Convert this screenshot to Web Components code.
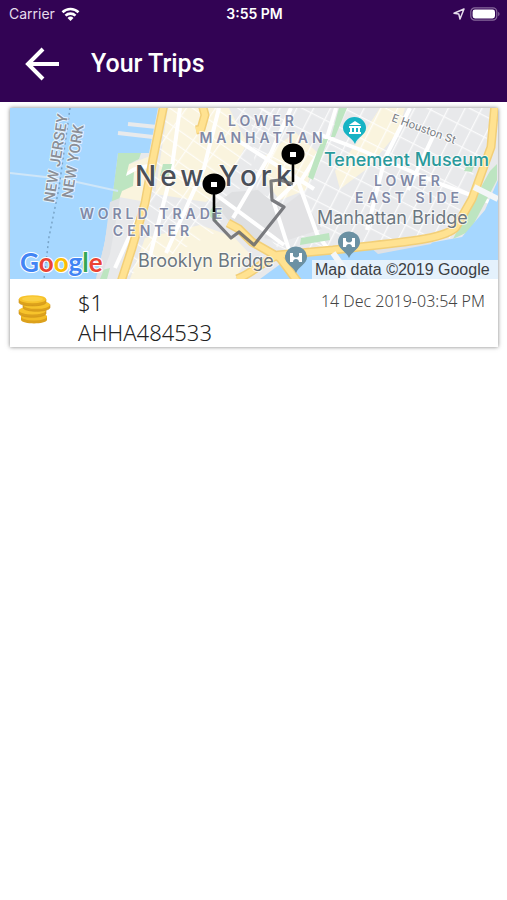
<!DOCTYPE html>
<html lang="en">
<head>
<meta charset="utf-8">
<meta name="viewport" content="width=device-width, initial-scale=1">
<title>Your Trips</title>
<style>
    body {
        margin: 0;
        background: #fff;
        font-family: "Noto Sans", "Open Sans", sans-serif;
    }
</style>
</head>
<body>
<trips-page>
    <status-bar slot="top" carrier="Carrier" time="3:55 PM"></status-bar>
    <app-header slot="top">Your Trips</app-header>
    <trip-card>
        <trip-map slot="map"></trip-map>
        <span slot="fare">$1</span>
        <span slot="reference">AHHA484533</span>
        <time slot="date" datetime="2019-12-14T15:54">14 Dec 2019-03:54 PM</time>
    </trip-card>
</trips-page>

<script>
// Page shell: a coloured top area and a list of cards
class TripsPage extends HTMLElement {
    constructor() {
        super();
        this.attachShadow({ mode: 'open' }).innerHTML = `
            <style>
                :host { display: block; }
                header { background: #320354; color: #fff; }
                main {
                    display: flex;
                    flex-direction: column;
                    gap: 12px;
                    padding: 6px 9px 12px 10px;
                }
            </style>
            <header><slot name="top"></slot></header>
            <main><slot></slot></main>
        `;
    }
}

class StatusBar extends HTMLElement {
    connectedCallback() {
        const root = this.shadowRoot || this.attachShadow({ mode: 'open' });
        root.innerHTML = `
            <style>
                :host {
                    display: grid;
                    grid-template-columns: 1fr auto 1fr;
                    align-items: center;
                    height: 28px;
                    padding: 0 7px 0 9px;
                    font: 14px/28px Inter, sans-serif;
                }
                .side { display: flex; align-items: center; gap: 6px; }
                .end { justify-content: flex-end; gap: 5px; }
                .carrier { color: #e6dcec; }
                .time { font-weight: 600; }
                svg { display: block; }
            </style>
            <div class="side">
                <span class="carrier">${this.getAttribute('carrier')}</span>
                <svg width="19" height="14" viewBox="0 0 18 14" fill="none" stroke="#fff" stroke-width="2.6" aria-hidden="true">
                    <path d="M1 5.2a11.6 11.6 0 0 1 16 0M4 8.6a7.2 7.2 0 0 1 10 0"/>
                    <path d="M9 14l-3-3.1a4.4 4.4 0 0 1 6 0z" fill="#fff" stroke="none"/>
                </svg>
            </div>
            <span class="time">${this.getAttribute('time')}</span>
            <div class="side end">
                <svg width="12" height="12" viewBox="0 0 12 12" fill="none" stroke="#e6dcec" stroke-width="1.5" stroke-linejoin="round" aria-hidden="true">
                    <path d="M11 1L1 5.2l4.8.9L7 11z"/>
                </svg>
                <svg width="30" height="14" viewBox="0 0 30 14" aria-hidden="true">
                    <rect x=".8" y=".8" width="26" height="12.4" rx="4" fill="none" stroke="#87699b" stroke-width="1.2"/>
                    <rect x="2.6" y="2.6" width="22.4" height="8.8" rx="2.4" fill="#fff"/>
                    <path d="M28.2 4.8c1.8.8 1.8 3.6 0 4.4z" fill="#87699b"/>
                </svg>
            </div>
        `;
    }
}

class AppHeader extends HTMLElement {
    constructor() {
        super();
        this.attachShadow({ mode: 'open' }).innerHTML = `
            <style>
                :host {
                    display: flex;
                    align-items: center;
                    gap: 24px;
                    height: 74px;
                    padding: 0 18px;
                }
                button {
                    display: flex;
                    padding: 7px;
                    margin-bottom: 2px;
                    border: 0;
                    background: none;
                    color: inherit;
                    cursor: pointer;
                }
                h1 {
                    margin: 0 0 2px;
                    font: 500 25px/32px Roboto, sans-serif;
                }
            </style>
            <button type="button" aria-label="Back">
                <svg width="35" height="34" viewBox="0 0 35 34" fill="none" stroke="#fff" stroke-width="4" aria-hidden="true">
                    <path d="M34 17H4M18 2L3 17l15 15"/>
                </svg>
            </button>
            <h1><slot></slot></h1>
        `;
    }
}

class TripCard extends HTMLElement {
    constructor() {
        super();
        this.attachShadow({ mode: 'open' }).innerHTML = `
            <style>
                :host {
                    display: block;
                    background: #fff;
                    box-shadow: 0 0 4px rgba(0, 0, 0, .5);
                }
                .details {
                    display: flex;
                    align-items: flex-start;
                    padding: 8px 13px 0 8px;
                }
                .coins { flex: none; margin: 8px 27px 0 0; }
                .text {
                    flex: 1;
                    font-size: 22px;
                    font-weight: 300;
                    line-height: 30px;
                    color: #222;
                }
                .text div { white-space: nowrap; }
                .date {
                    font-size: 16px;
                    font-weight: 300;
                    line-height: 28px;
                    color: #444;
                    white-space: nowrap;
                }
            </style>
            <slot name="map"></slot>
            <div class="details">
                <svg class="coins" width="33" height="29" viewBox="0 0 33 29" aria-hidden="true">
                    <g stroke="#c98f17">
                        <path d="M3 21v4c1 4.5 25 4.5 26 0v-4z" fill="#dca11c" stroke="none"/>
                        <ellipse cx="16" cy="21.5" rx="13" ry="4" fill="#f3bc25" stroke="none"/>
                        <path d="M1 15v3.5c1 5 26 5 27 0V15z" fill="#dca11c" stroke-width=".6"/>
                        <ellipse cx="14.5" cy="15.5" rx="13.5" ry="4" fill="#f7c32b" stroke="none"/>
                        <path d="M5 9.5v3c1 5 26 5 27 0v-3z" fill="#dca11c" stroke-width=".6"/>
                        <ellipse cx="18.5" cy="9.8" rx="13.5" ry="4" fill="#f7c32b" stroke="none"/>
                        <path d="M1 4v3.5c1 4.5 26 4.5 27 0V4z" fill="#dca11c" stroke-width=".6"/>
                        <ellipse cx="14.5" cy="4.2" rx="13.5" ry="4" fill="#f7c32b" stroke="none"/>
                    </g>
                    <ellipse cx="14.5" cy="4" rx="10.5" ry="2.5" fill="#fbd044"/>
                </svg>
                <div class="text">
                    <div><slot name="fare"></slot></div>
                    <div><slot name="reference"></slot></div>
                </div>
                <div class="date"><slot name="date"></slot></div>
            </div>
        `;
    }
}

// Static map with the trip's route drawn over it
class TripMap extends HTMLElement {
    constructor() {
        super();
        this.attachShadow({ mode: 'open' }).innerHTML = `
            <style>
                :host { display: block; }
                svg { display: block; width: 100%; height: auto; }
                text {
                    font-family: Inter, sans-serif;
                    paint-order: stroke;
                    stroke: rgba(255, 255, 255, .7);
                    stroke-width: 2px;
                    stroke-linejoin: round;
                }
                .area { font-size: 14px; font-weight: 600; letter-spacing: 4px; fill: #8189a6; text-anchor: middle; }
                .place { font-size: 18px; fill: #6c7780; }
                .museum { font-size: 18px; font-weight: 500; fill: #2a9a9c; }
                .city { font-size: 28px; font-weight: 500; letter-spacing: 4px; fill: #4a4f58; }
                .state { font: 500 15px Roboto, sans-serif; fill: #8b8f97; text-anchor: middle; }
                .street { font-size: 11px; fill: #75797f; }
                .google { font: 26px Lato, sans-serif; font-weight: 700; stroke: #fff; }
                .credit { font: 16px "Liberation Sans", sans-serif; fill: #3c4043; stroke: none; }
            </style>
            <svg viewBox="0 0 488 171" role="group" aria-label="Trip route">
                <defs>
                    <pattern id="blocks" width="15" height="19" patternUnits="userSpaceOnUse" patternTransform="rotate(27)">
                        <path d="M0 0H15M0 0V19" stroke="#fff" stroke-opacity=".8" stroke-width="2.6"/>
                    </pattern>
                    <pattern id="streets" width="13" height="24" patternUnits="userSpaceOnUse" patternTransform="rotate(-55)">
                        <path d="M0 0H13M0 0V24" stroke="#fff" stroke-opacity=".8" stroke-width="2.4"/>
                    </pattern>
                </defs>
                <rect width="488" height="171" fill="#e8e9eb"/>

                <g fill="#faf4de">
                    <path d="M158 0h61l18 35-21 43-20 16-51-8z"/>
                    <path d="M255 48l30-24 22 20-11 38-26 10-15-18z"/>
                    <path d="M110 60l30-12-9 45-28-5zM135 130l55-13 34 12 16 17-15 25H120z"/>
                    <path d="M370 0h25l-7 24-30 36-28 21-5-18 24-31z"/>
                </g>
                <path d="M155 0H270L230 80 205 125 112 171 140 70z" fill="url(#streets)"/>
                <path d="M240 0H488L440 130 275 148 250 120z" fill="url(#blocks)"/>
                <path d="M222 84l26-2 22 18-25 36-26-23-14-17z" fill="#dedfe1"/>
                <path d="M290 86l22 35-40 13-18-4 20-32z" fill="#e2e2e4"/>

                <g stroke="#fff" stroke-width="4" fill="none">
                    <path d="M170 0l-9 66-21 82M209 0l-15 60-38 85M281 0l-20 45-38 65M326 0l-10 33-27 43 18 50 33 45M306 25l45 17 82 35 55 20"/>
                    <path d="M190 75l84 62M227 32l77 49M155 58l48 25M280 145l-16-50 25-24M400 0l-25 50-18 72M425 24l-27 58"/>
                    <path d="M113 80c3-18 10-20 26-22M105 160l24-53 13-36"/>
                </g>

                <g fill="#bde5c1">
                    <path d="M108 45h23l-2 6-10 5-3 12 8-4-1 14-11 5-5 14h-6z"/>
                    <path d="M153 56h9l-3 12h-9zM308 41l5-10h5l-15 41-5-3zM329 0h8L325 29h-4zM204 97l8 6-6 12-8-9z"/>
                    <path d="M291 130l28-5 1 7-30 5zM467 50l-5 14-8-1 6-12zM88 163l12-3-3 11h-11z"/>
                    <path d="M480 63l7-7v16l-27 51-17 8 8-16z"/>
                </g>

                <g fill="#a6d7ff">
                    <path d="M0 0h148l-9 45h-31l-6 47-8 46-8 33H0z"/>
                    <path d="M488 72l-13 30-23 27-38 7-82 7-52 6-30 22h238z"/>
                </g>
                <path d="M108 25l35 4M118 16l29 3" stroke="#e8eaec" stroke-width="4"/>
                <path d="M100 94l10-4-10 56-10 25H86l9-38z" fill="#e0e2e5"/>
                <path d="M360 139l65-9-4 6-53 10z" fill="#e0e2e5"/>
                <path d="M0 65l53 6 55 12" stroke="#cfe6f8" stroke-width="2" fill="none"/>
                <path d="M60 0L49 80l-10 49-5 42" stroke="#78a4c8" stroke-width="1.5" stroke-dasharray="2 3" fill="none"/>

                <g fill="none" stroke-linejoin="round">
                    <g stroke="#f2cf78" stroke-width="9">
                        <path d="M154-4l-11 55-8 44-13 45-11 34"/>
                        <path d="M485-4l-4 43-19 52-16 28c-12 14-68 16-123 23l-55 5c-18 8-25 18-41 24"/>
                        <path d="M218 115l11 6 13 13 28 16 18 24"/>
                        <path d="M192-4l3 11-4 14-5 1"/>
                    </g>
                    <g stroke="#ffe291" stroke-width="6">
                        <path d="M154-4l-11 55-8 44-13 45-11 34"/>
                        <path d="M485-4l-4 43-19 52-16 28c-12 14-68 16-123 23l-55 5c-18 8-25 18-41 24"/>
                        <path d="M218 115l11 6 13 13 28 16 18 24"/>
                        <path d="M192-4l3 11-4 14-5 1"/>
                    </g>
                </g>
                <path d="M323 145l20 28M464 79l24 12" stroke="#f4f6f8" stroke-width="6"/>

                <text class="area" x="253" y="18">LOWER</text>
                <text class="area" x="253" y="35">MANHATTAN</text>
                <text class="area" x="143" y="111">WORLD TRADE</text>
                <text class="area" x="143" y="128">CENTER</text>
                <text class="area" x="399" y="78">LOWER</text>
                <text class="area" x="399" y="95">EAST SIDE</text>
                <text class="city" x="125" y="78">New York</text>
                <text class="state" transform="translate(51 51) rotate(-81)">NEW JERSEY</text>
                <text class="state" transform="translate(68 54) rotate(-81)">NEW YORK</text>
                <text class="street" transform="translate(381 13) rotate(20)">E Houston St</text>
                <text class="museum" x="314" y="58">Tenement Museum</text>
                <text class="place" x="307" y="116">Manhattan Bridge</text>
                <text class="place" x="128" y="159">Brooklyn Bridge</text>

                <path d="M345 36c-3-7-12-9-12-16a11.5 11 0 0 1 23 0c0 7-9 9-11 16z" fill="#16b3c4"/>
                <path d="M339 17l6-4 6 4zM339 18h12v2h-12zM340 20h2v4h-2zM344 20h2v4h-2zM348 20h2v4h-2zM339 24h12v2h-12z" fill="#fff"/>
                <g id="bridge">
                    <path d="M286 165c-3-7-11-9-11-16a11 10.5 0 0 1 22 0c0 7-8 9-11 16z" fill="#6b91a3"/>
                    <path d="M280 145h3v3c2 2 4 2 6 0v-3h3v9h-3c0-4-6-4-6 0h-3z" fill="#fff"/>
                </g>
                <use href="#bridge" x="53" y="-15"/>

                <path d="M204 105v7l17 18 8-6 15 13 30-38-12-7-1-19 9-1 13 4" fill="none" stroke="#65666b" stroke-opacity=".85" stroke-width="3.2" stroke-linejoin="round"/>
                <g>
                    <path d="M204 80v24M283 50v24" stroke="#000" stroke-width="2.6"/>
                    <ellipse cx="204" cy="76" rx="11.5" ry="10.5"/>
                    <ellipse cx="283" cy="46" rx="11.5" ry="10.5"/>
                    <path d="M201 74h6v5h-6zM280 44h6v5h-6z" fill="#fff"/>
                </g>

                <text class="google" x="10" y="164"><tspan fill="#4285f4">G</tspan><tspan fill="#ea4335">o</tspan><tspan fill="#fbbc05">o</tspan><tspan fill="#4285f4">g</tspan><tspan fill="#34a853">l</tspan><tspan fill="#ea4335">e</tspan></text>
                <rect x="302" y="152" width="186" height="19" fill="#f2f7fb" fill-opacity=".82"/>
                <text class="credit" x="305" y="167">Map data ©2019 Google</text>
            </svg>
        `;
    }
}

customElements.define('trips-page', TripsPage);
customElements.define('status-bar', StatusBar);
customElements.define('app-header', AppHeader);
customElements.define('trip-card', TripCard);
customElements.define('trip-map', TripMap);
</script>
</body>
</html>
